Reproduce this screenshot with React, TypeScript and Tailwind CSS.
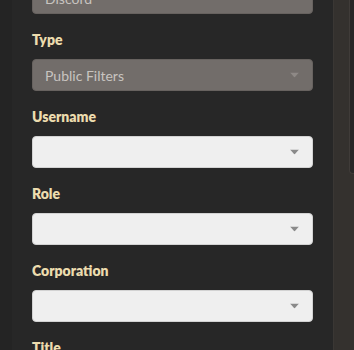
type Field = { label: string; value?: string; disabled?: boolean };

const fields: Field[] = [
  { label: 'Type', value: 'Public Filters', disabled: true },
  { label: 'Username' },
  { label: 'Role' },
  { label: 'Corporation' },
  { label: 'Title' },
];

function Caret({ disabled }: { disabled?: boolean }) {
  return (
    <svg width="9" height="5" viewBox="0 0 9 5" className="absolute right-[13px] top-1/2 -translate-y-1/2">
      <path d="M0 0h9L4.5 5z" fill={disabled ? '#8e8986' : '#8a8a8a'} />
    </svg>
  );
}

function Select({ value, disabled }: { value?: string; disabled?: boolean }) {
  return (
    <div
      className={`relative h-8 rounded-[4px] border px-3 flex items-center text-[14px] ${
        disabled ? 'bg-[#726d6a] border-[#67625f] text-[#c8c4c0]' : 'bg-[#efefef] border-[#d2d2d2] text-[#333]'
      }`}
    >
      <span>{value}</span>
      <Caret disabled={disabled} />
    </div>
  );
}

export default function App() {
  return (
    <div className="w-[354px] h-[350px] overflow-hidden flex bg-[#222222] font-['Lato',sans-serif]">
      <div className="w-3 shrink-0 bg-[#242424]" />
      <div className="w-[321px] shrink-0 bg-[#272727] px-5">
        <div className="-mt-[18px] mb-4">
          <div className="relative h-8 rounded-[4px] border bg-[#726d6a] border-[#67625f] text-[#c8c4c0] px-3 flex items-center text-[14px]">
            Discord
          </div>
        </div>
        {fields.map((f) => (
          <div key={f.label} className="mb-4">
            <div className="h-5 leading-5 text-[14px] font-extrabold text-[#ecdcae] mb-[9px]">{f.label}</div>
            <Select value={f.value} disabled={f.disabled} />
          </div>
        ))}
      </div>
      <div className="flex-1 bg-[#34312e] border-l border-[#3a3734] pl-[15px]">
        <div className="h-[174px] bg-[#282828] border-l border-b border-[#403c39] rounded-bl-[4px]" />
      </div>
    </div>
  );
}
